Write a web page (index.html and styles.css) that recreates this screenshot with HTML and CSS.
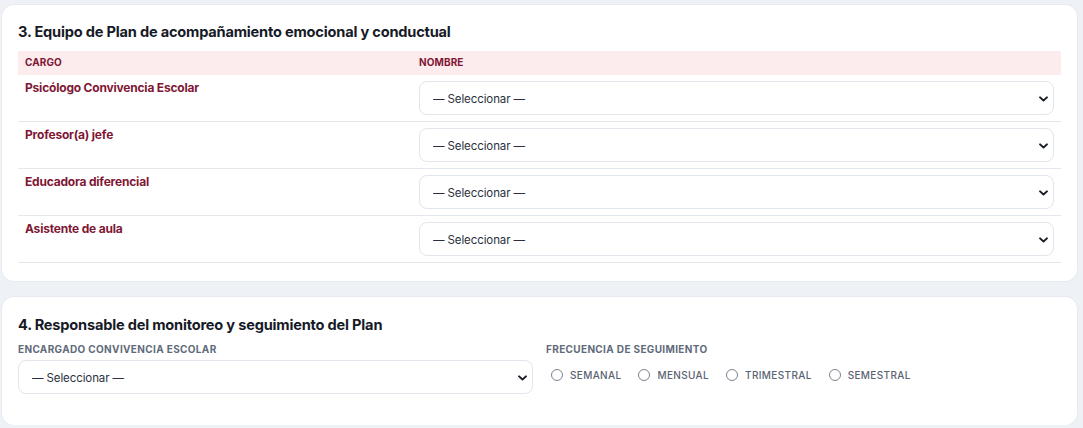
FILE: index.html
```html
<!DOCTYPE html>
<html lang="es">
<head>
<meta charset="utf-8">
<title>Plan de acompañamiento</title>
<link rel="stylesheet" href="styles.css">
</head>
<body>
<div class="page">
  <section class="card">
    <h2 class="card-title">3. Equipo de Plan de acompañamiento emocional y conductual</h2>
    <table class="team">
      <thead>
        <tr><th class="col-cargo">CARGO</th><th>NOMBRE</th></tr>
      </thead>
      <tbody>
        <tr>
          <td class="role">Psicólogo Convivencia Escolar</td>
          <td><div class="select-wrap"><select class="select"><option>— Seleccionar —</option></select><svg class="chev" viewBox="0 0 10 6"><path d="M1.2 1.2 L5 4.6 L8.8 1.2"/></svg></div></td>
        </tr>
        <tr>
          <td class="role">Profesor(a) jefe</td>
          <td><div class="select-wrap"><select class="select"><option>— Seleccionar —</option></select><svg class="chev" viewBox="0 0 10 6"><path d="M1.2 1.2 L5 4.6 L8.8 1.2"/></svg></div></td>
        </tr>
        <tr>
          <td class="role">Educadora diferencial</td>
          <td><div class="select-wrap"><select class="select"><option>— Seleccionar —</option></select><svg class="chev" viewBox="0 0 10 6"><path d="M1.2 1.2 L5 4.6 L8.8 1.2"/></svg></div></td>
        </tr>
        <tr>
          <td class="role">Asistente de aula</td>
          <td><div class="select-wrap"><select class="select"><option>— Seleccionar —</option></select><svg class="chev" viewBox="0 0 10 6"><path d="M1.2 1.2 L5 4.6 L8.8 1.2"/></svg></div></td>
        </tr>
      </tbody>
    </table>
  </section>

  <section class="card card-2">
    <h2 class="card-title">4. Responsable del monitoreo y seguimiento del Plan</h2>
    <div class="grid">
      <div class="field">
        <label class="field-label">ENCARGADO CONVIVENCIA ESCOLAR</label>
        <div class="select-wrap"><select class="select"><option>— Seleccionar —</option></select><svg class="chev" viewBox="0 0 10 6"><path d="M1.2 1.2 L5 4.6 L8.8 1.2"/></svg></div>
      </div>
      <div class="field">
        <span class="field-label">FRECUENCIA DE SEGUIMIENTO</span>
        <div class="radios">
          <label class="radio"><span class="dot"></span>SEMANAL</label>
          <label class="radio"><span class="dot"></span>MENSUAL</label>
          <label class="radio"><span class="dot"></span>TRIMESTRAL</label>
          <label class="radio"><span class="dot"></span>SEMESTRAL</label>
        </div>
      </div>
    </div>
  </section>
</div>
</body>
</html>
```

FILE: styles.css
```css
* { box-sizing: border-box; }
html, body { margin: 0; padding: 0; background: #eef1f6; }
body {
  font-family: Inter, "Noto Sans", sans-serif;
  color: #1b1f2a;
}
.page {
  padding: 5px 6px 0 2px;
  display: flex;
  flex-direction: column;
  gap: 16px;
}
.card {
  background: #ffffff;
  border-radius: 12px;
  box-shadow: 0 0 0 1px #e7eaf0;
  padding: 17px 16px 18px 16px;
}
.card-2 { padding-top: 18px; padding-bottom: 31px; }
.card-title {
  margin: 0 0 9px 0;
  font-size: 14.6px;
  line-height: 20px;
  font-weight: 700;
  letter-spacing: -0.2px;
  color: #161a26;
}
.card-2 .card-title { margin-bottom: 7px; }
.team {
  width: 100%;
  border-collapse: collapse;
}
.team th {
  background: #fdeced;
  color: #7f1734;
  font-size: 10px;
  font-weight: 700;
  text-align: left;
  padding: 4px 7px 6px 7px;
  height: 24px;
  letter-spacing: 0.1px;
}
.team .col-cargo { width: 394px; }
.team td {
  border-bottom: 1px solid #e4e7ec;
  padding: 6px 7px;
  vertical-align: top;
}
.team td.role {
  color: #7f1734;
  font-size: 12px;
  font-weight: 700;
  letter-spacing: -0.2px;
  padding-top: 5px;
}
.select-wrap { position: relative; }
.select {
  appearance: none;
  -webkit-appearance: none;
  display: block;
  width: 100%;
  height: 34px;
  border: 1px solid #e1e5ec;
  border-radius: 8px;
  background: #fff;
  padding: 2px 30px 0 13px;
  font-family: Inter, "Noto Sans", sans-serif;
  font-size: 11.5px;
  letter-spacing: -0.1px;
  color: #2c3140;
}
.chev {
  position: absolute;
  right: 6px;
  top: 15px;
  width: 9px;
  height: 6px;
  pointer-events: none;
}
.chev path {
  fill: none;
  stroke: #1a1d26;
  stroke-width: 2.2;
  stroke-linecap: round;
  stroke-linejoin: round;
}
.grid {
  display: grid;
  grid-template-columns: 1fr 1fr;
  column-gap: 13px;
}
.field-label {
  display: block;
  font-size: 10px;
  font-weight: 700;
  color: #5f6b7a;
  letter-spacing: 0.35px;
  line-height: 14px;
  margin-bottom: 4px;
}
.radios {
  display: flex;
  align-items: center;
  gap: 17px;
  padding-left: 5px;
  height: 30px;
}
.radio {
  display: flex;
  align-items: center;
  gap: 7px;
  font-size: 10px;
  font-weight: 500;
  letter-spacing: 0.35px;
  color: #5a6372;
}
.dot {
  width: 12px;
  height: 12px;
  border-radius: 50%;
  border: 1px solid #7c8492;
  background: #fff;
}
```
